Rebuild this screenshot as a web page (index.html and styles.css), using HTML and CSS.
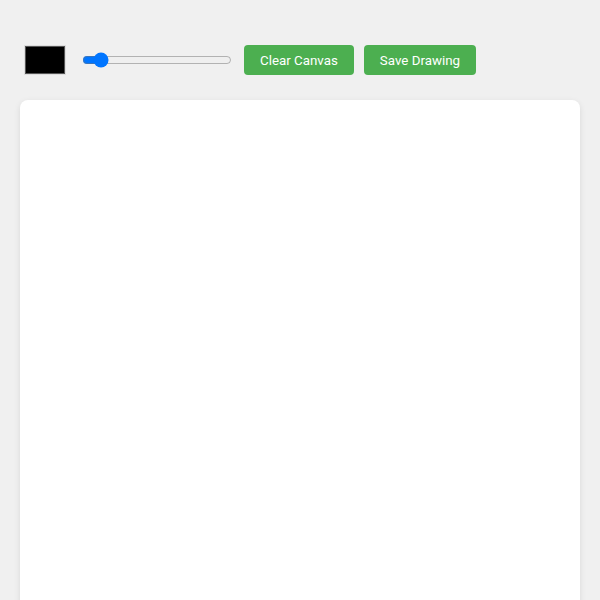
FILE: index.html
```html
<!DOCTYPE html>
<html>
<head>
<meta charset="utf-8">
<link rel="stylesheet" href="styles.css">
</head>
<body>
<div class="app">
  <div class="toolbar">
    <input class="color" type="color" value="#000000">
    <input class="size" type="range" min="1" max="50" value="5">
    <button class="btn">Clear Canvas</button>
    <button class="btn">Save Drawing</button>
  </div>
  <div class="canvas"></div>
</div>
</body>
</html>
```

FILE: styles.css
```css
html, body {
  margin: 0;
  padding: 0;
  background: #f0f0f0;
  font-family: Roboto, "Liberation Sans", sans-serif;
}
.app {
  padding: 45px 20px 0;
}
.toolbar {
  display: flex;
  align-items: center;
  height: 30px;
  padding: 0 4px;
  margin-bottom: 25px;
}
.color {
  width: 42px;
  height: 30px;
  margin: 0 16px 0 0;
  padding: 0;
  border: 1px solid #ddd;
  background: #000;
  box-sizing: border-box;
}
.color::-webkit-color-swatch-wrapper {
  padding: 0;
}
.color::-webkit-color-swatch {
  border: 1px solid #555;
}
.size {
  width: 150px;
  margin: 0 12px 0 0;
}
.btn {
  height: 30px;
  padding: 0 16px;
  margin-right: 10px;
  border: none;
  border-radius: 4px;
  background: #4caf50;
  color: #fff;
  font-family: Roboto, "Liberation Sans", sans-serif;
  font-size: 13.33px;
}
.canvas {
  width: 560px;
  height: 560px;
  background: #fff;
  border-radius: 8px;
  box-shadow: 0 2px 6px rgba(0,0,0,0.1);
}
```
